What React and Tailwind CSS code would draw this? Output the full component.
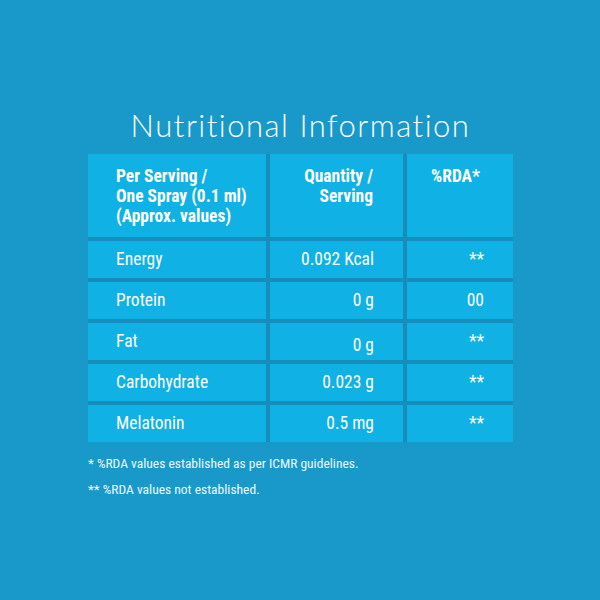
import React from 'react'

const rows = [
  { name: 'Energy', qty: '0.092 Kcal', rda: '**' },
  { name: 'Protein', qty: '0 g', rda: '00' },
  { name: 'Fat', qty: '0 g', rda: '**', low: true },
  { name: 'Carbohydrate', qty: '0.023 g', rda: '**' },
  { name: 'Melatonin', qty: '0.5 mg', rda: '**' },
]

const cond = { fontFamily: '"Liberation Sans Narrow", "Roboto Condensed", Roboto, sans-serif' }

const App = () => {
  return (
    <div className="w-[600px] h-[600px] bg-[#1999c9] flex flex-col items-start pl-[88px] pt-[107px] text-white">
      <h1 className="w-[425px] text-center text-[31px] leading-[36px] font-light tracking-[1.5px] text-white" style={{ fontFamily: 'Lato, "Open Sans", sans-serif' }}>
        Nutritional Information
      </h1>

      <div className="mt-[11px] w-[425px] grid grid-cols-[178px_133px_106px] gap-[4px] bg-[#168dbb]" style={cond}>
        <div className="bg-[#10b1e4] h-[83px] pl-[28px] pt-[12px] text-[17.5px] leading-[20px] font-bold">
          Per Serving /<br />One Spray (0.1 ml)<br />(Approx. values)
        </div>
        <div className="bg-[#10b1e4] h-[83px] pr-[30px] pt-[12px] text-[17.5px] leading-[20px] font-bold text-right">
          Quantity /<br />Serving
        </div>
        <div className="bg-[#10b1e4] h-[83px] pr-[33px] pt-[12px] text-[17.5px] leading-[20px] font-bold text-right">
          %RDA*
        </div>

        {rows.map((r) => (
          <React.Fragment key={r.name}>
            <div className="bg-[#10b1e4] h-[37px] pl-[28px] flex items-center text-[17.5px]">{r.name}</div>
            <div className={`bg-[#10b1e4] h-[37px] pr-[29px] flex items-center justify-end text-[17.5px] ${r.low ? 'pt-[8px]' : ''}`}>{r.qty}</div>
            <div className="bg-[#10b1e4] h-[37px] pr-[29px] flex items-center justify-end text-[17.5px]">{r.rda}</div>
          </React.Fragment>
        ))}
      </div>

      <div className="mt-[12px] flex flex-col gap-[8px] text-[13.5px] leading-[18px] text-[#eef9fd]" style={cond}>
        <p>* %RDA values established as per ICMR guidelines.</p>
        <p>** %RDA values not established.</p>
      </div>
    </div>
  )
}

export default App
